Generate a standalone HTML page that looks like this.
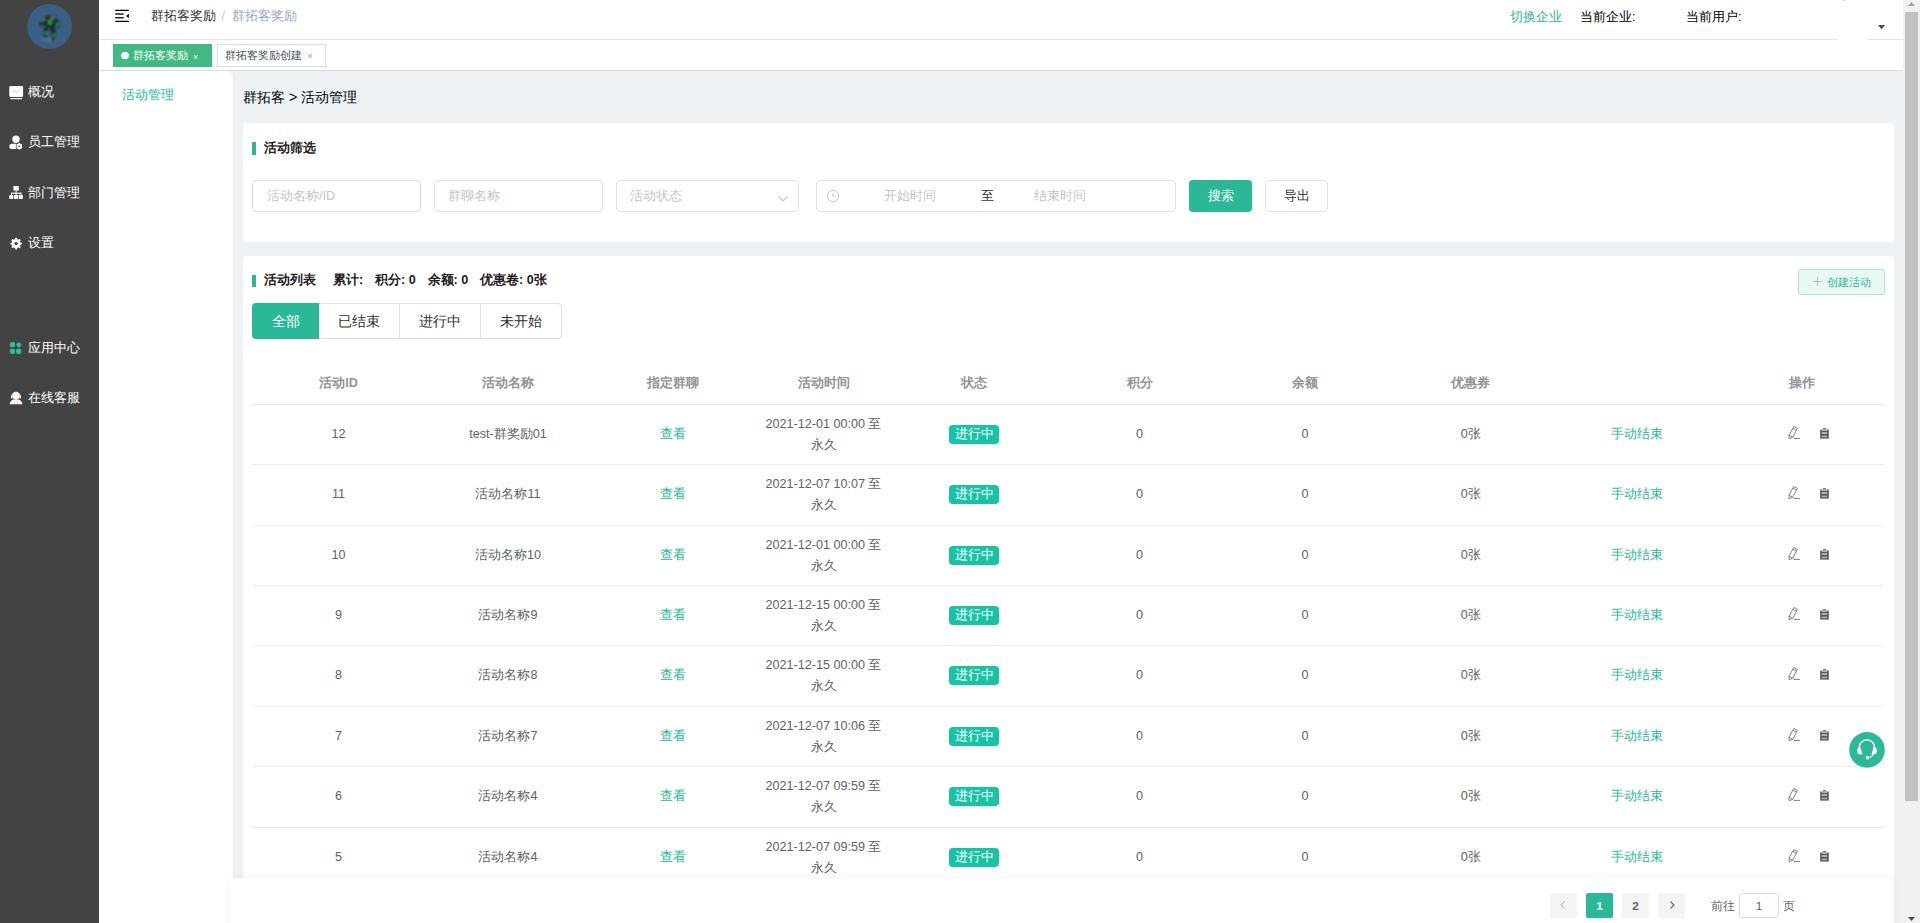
<!DOCTYPE html>
<html><head><meta charset="utf-8">
<style>
*{box-sizing:border-box;margin:0;padding:0}
html,body{width:1920px;height:923px;overflow:hidden;background:#fff;font-family:"Liberation Sans",sans-serif;color:#303133}
.a{position:absolute;white-space:nowrap}
#side{position:absolute;left:0;top:0;width:99px;height:923px;background:#434343}
#avatar{position:absolute;left:27px;top:4px;width:45px;height:45px;border-radius:50%;background:#3a5f85;overflow:hidden}
.mi{position:absolute;left:28px;font-size:12.6px;color:#fff;line-height:14px}
#header{position:absolute;left:99px;top:0;width:1804px;height:40px;background:#fff}
#tags{position:absolute;left:99px;top:40px;width:1804px;height:31px;background:#fff;border-bottom:1px solid #d8dce5}
#sub{position:absolute;left:99px;top:71px;width:135px;height:852px;background:#fff;border-right:1px solid #e4e7ed;border-top-right-radius:8px}
#main{position:absolute;left:99px;top:71px;width:1804px;height:852px;background:#eef2f5}
.card{position:absolute;background:#fff;border-radius:4px}
.bar{position:absolute;width:4px;background:#2bb898}
.inp{position:absolute;top:180px;height:32px;border:1px solid #dcdfe6;border-radius:4px;background:#fff}
.ph{position:absolute;font-size:12.6px;color:#c0c4cc;line-height:14px}
.th{position:absolute;top:376px;width:200px;margin-left:-100px;text-align:center;font-size:12.6px;color:#909399;font-weight:bold;line-height:14px}
.hl{position:absolute;left:252px;width:1632px;height:1px;background:#ebeef5}
.td{position:absolute;width:200px;margin-left:-100px;text-align:center;font-size:12.6px;color:#606266;line-height:14px}
.tag{position:absolute;width:50px;height:19px;margin-left:-25px;background:#15c4a4;border-radius:4px;color:#fff;font-size:12.6px;line-height:19px;text-align:center}
.grn{color:#2bb898}
#sb{position:absolute;left:1903px;top:0;width:17px;height:923px;background:#f1f1f1}
#thumb{position:absolute;left:1905px;top:12px;width:13px;height:789px;background:#c1c1c1}
</style></head><body>
<div id="side">
  <div id="avatar"></div>
  <div class="mi" style="top:85px">概况</div>
  <div class="mi" style="top:135px">员工管理</div>
  <div class="mi" style="top:186px">部门管理</div>
  <div class="mi" style="top:236px">设置</div>
  <div class="mi" style="top:341px">应用中心</div>
  <div class="mi" style="top:391px">在线客服</div>
</div>
<div id="header">
  <div class="a" style="left:52px;top:9px;font-size:12.6px;line-height:14px;color:#303133">群拓客奖励 <span style="color:#c0c4cc;margin:0 3px 0 2px">/</span> <span style="color:#97a8be">群拓客奖励</span></div>
  <div class="a grn" style="left:1411px;top:10px;font-size:12.6px;line-height:14px">切换企业</div>
  <div class="a" style="left:1481px;top:10px;font-size:12.6px;line-height:14px;color:#000">当前企业:</div>
  <div class="a" style="left:1587px;top:10px;font-size:12.6px;line-height:14px;color:#000">当前用户:</div>
</div>
<div id="tags">
  <div class="a" style="left:14px;top:4px;width:99px;height:23px;background:#42b983;color:#fff;font-size:10.8px;line-height:23px;padding-left:20px">群拓客奖励<span style="position:absolute;left:8px;top:7.5px;width:7.5px;height:7.5px;border-radius:50%;background:#fff"></span><span style="position:absolute;left:80px;top:1.5px;font-size:9px">×</span></div>
  <div class="a" style="left:118px;top:4px;width:109px;height:23px;border:1px solid #d8dce5;color:#495060;font-size:10.8px;line-height:21px;padding-left:7px">群拓客奖励创建<span style="position:absolute;left:89.5px;top:0.5px;font-size:9px;color:#999">×</span></div>
</div>
<div id="main"></div>
<div id="sub">
  <div class="a grn" style="left:23px;top:17px;font-size:12.6px;line-height:14px">活动管理</div>
</div>
<div class="a" style="left:243px;top:89px;font-size:14.4px;line-height:16px;color:#000">群拓客 &gt; 活动管理</div>

<div class="card" style="left:243px;top:123px;width:1651px;height:119px"></div>
<div class="bar" style="left:252px;top:142px;height:13px"></div>
<div class="a" style="left:264px;top:141px;font-size:12.6px;line-height:14px;font-weight:bold;color:#1f2022">活动筛选</div>
<div class="inp" style="left:252px;width:169px"></div><div class="ph" style="left:267px;top:189px">活动名称/ID</div>
<div class="inp" style="left:434px;width:169px"></div><div class="ph" style="left:448px;top:189px">群聊名称</div>
<div class="inp" style="left:616px;width:183px"></div><div class="ph" style="left:630px;top:189px">活动状态</div>
<div class="inp" style="left:816px;width:360px"></div>
<div class="ph" style="left:884px;top:189px">开始时间</div>
<div class="a" style="left:981px;top:189px;font-size:12.6px;line-height:14px;color:#303133">至</div>
<div class="ph" style="left:1034px;top:189px">结束时间</div>
<div class="a" style="left:1189px;top:180px;width:63px;height:32px;background:#2bb898;border-radius:4px;color:#fff;font-size:12.6px;line-height:32px;text-align:center">搜索</div>
<div class="a" style="left:1265px;top:180px;width:63px;height:32px;border:1px solid #dcdfe6;border-radius:4px;color:#303133;font-size:12.6px;line-height:30px;text-align:center">导出</div>

<div class="card" style="left:243px;top:256px;width:1651px;height:700px"></div>
<div class="bar" style="left:252px;top:275px;height:12px"></div>
<div class="a" style="left:264px;top:273px;font-size:12.6px;line-height:14px;font-weight:bold;color:#1f2022">活动列表</div>

<div id="rows">
<div class="hl" style="top:404px"></div>
<div class="th" style="left:338.5px">活动ID</div>
<div class="th" style="left:508px">活动名称</div>
<div class="th" style="left:673px">指定群聊</div>
<div class="th" style="left:823.5px">活动时间</div>
<div class="th" style="left:974px">状态</div>
<div class="th" style="left:1139.5px">积分</div>
<div class="th" style="left:1305px">余额</div>
<div class="th" style="left:1470.75px">优惠券</div>
<div class="th" style="left:1802px">操作</div>
<div class="hl" style="top:464px"></div>
<div class="td" style="left:338.5px;top:426.50px">12</div>
<div class="td" style="left:508px;top:426.50px">test-群奖励01</div>
<div class="td grn" style="left:673px;top:426.50px">查看</div>
<div class="td" style="left:823.5px;top:414.00px;line-height:21px">2021-12-01 00:00 至<br>永久</div>
<div class="tag" style="left:974px;top:424.50px">进行中</div>
<div class="td" style="left:1139.5px;top:426.50px">0</div>
<div class="td" style="left:1305px;top:426.50px">0</div>
<div class="td" style="left:1470.75px;top:426.50px">0张</div>
<div class="td grn" style="left:1636.5px;top:426.50px">手动结束</div>
<svg class="a" style="left:1786.5px;top:426.00px" width="14" height="14" viewBox="0 0 14 14"><path d="M6.8 0.5 L10.4 2.3 L5.7 11.4 L2 12.6 L2.1 9.1 Z M6 2.3 L9.5 4.1 M2.2 9.3 L5.6 11.2" fill="none" stroke="#6b6e73" stroke-width="0.85" stroke-linejoin="round"/><path d="M6.6 12.4 H12.9" stroke="#6b6e73" stroke-width="0.9"/></svg>
<svg class="a" style="left:1820px;top:427.50px" width="10" height="12" viewBox="0 0 10 12"><rect x="0.2" y="1.5" width="8.55" height="9.1" fill="#555"/><rect x="2.8" y="0.3" width="3.4" height="1.4" rx="0.5" fill="#555"/><rect x="1.6" y="1.5" width="5.6" height="1.2" fill="#fff" opacity="0.8"/><rect x="1.6" y="4.4" width="5.6" height="1.2" fill="#eee"/><rect x="1.6" y="7.5" width="5.6" height="1.9" fill="#aaa"/></svg>
<div class="hl" style="top:525px"></div>
<div class="td" style="left:338.5px;top:486.50px">11</div>
<div class="td" style="left:508px;top:486.50px">活动名称11</div>
<div class="td grn" style="left:673px;top:486.50px">查看</div>
<div class="td" style="left:823.5px;top:474.00px;line-height:21px">2021-12-07 10:07 至<br>永久</div>
<div class="tag" style="left:974px;top:484.50px">进行中</div>
<div class="td" style="left:1139.5px;top:486.50px">0</div>
<div class="td" style="left:1305px;top:486.50px">0</div>
<div class="td" style="left:1470.75px;top:486.50px">0张</div>
<div class="td grn" style="left:1636.5px;top:486.50px">手动结束</div>
<svg class="a" style="left:1786.5px;top:486.00px" width="14" height="14" viewBox="0 0 14 14"><path d="M6.8 0.5 L10.4 2.3 L5.7 11.4 L2 12.6 L2.1 9.1 Z M6 2.3 L9.5 4.1 M2.2 9.3 L5.6 11.2" fill="none" stroke="#6b6e73" stroke-width="0.85" stroke-linejoin="round"/><path d="M6.6 12.4 H12.9" stroke="#6b6e73" stroke-width="0.9"/></svg>
<svg class="a" style="left:1820px;top:487.50px" width="10" height="12" viewBox="0 0 10 12"><rect x="0.2" y="1.5" width="8.55" height="9.1" fill="#555"/><rect x="2.8" y="0.3" width="3.4" height="1.4" rx="0.5" fill="#555"/><rect x="1.6" y="1.5" width="5.6" height="1.2" fill="#fff" opacity="0.8"/><rect x="1.6" y="4.4" width="5.6" height="1.2" fill="#eee"/><rect x="1.6" y="7.5" width="5.6" height="1.9" fill="#aaa"/></svg>
<div class="hl" style="top:585px"></div>
<div class="td" style="left:338.5px;top:547.50px">10</div>
<div class="td" style="left:508px;top:547.50px">活动名称10</div>
<div class="td grn" style="left:673px;top:547.50px">查看</div>
<div class="td" style="left:823.5px;top:535.00px;line-height:21px">2021-12-01 00:00 至<br>永久</div>
<div class="tag" style="left:974px;top:545.50px">进行中</div>
<div class="td" style="left:1139.5px;top:547.50px">0</div>
<div class="td" style="left:1305px;top:547.50px">0</div>
<div class="td" style="left:1470.75px;top:547.50px">0张</div>
<div class="td grn" style="left:1636.5px;top:547.50px">手动结束</div>
<svg class="a" style="left:1786.5px;top:547.00px" width="14" height="14" viewBox="0 0 14 14"><path d="M6.8 0.5 L10.4 2.3 L5.7 11.4 L2 12.6 L2.1 9.1 Z M6 2.3 L9.5 4.1 M2.2 9.3 L5.6 11.2" fill="none" stroke="#6b6e73" stroke-width="0.85" stroke-linejoin="round"/><path d="M6.6 12.4 H12.9" stroke="#6b6e73" stroke-width="0.9"/></svg>
<svg class="a" style="left:1820px;top:548.50px" width="10" height="12" viewBox="0 0 10 12"><rect x="0.2" y="1.5" width="8.55" height="9.1" fill="#555"/><rect x="2.8" y="0.3" width="3.4" height="1.4" rx="0.5" fill="#555"/><rect x="1.6" y="1.5" width="5.6" height="1.2" fill="#fff" opacity="0.8"/><rect x="1.6" y="4.4" width="5.6" height="1.2" fill="#eee"/><rect x="1.6" y="7.5" width="5.6" height="1.9" fill="#aaa"/></svg>
<div class="hl" style="top:645px"></div>
<div class="td" style="left:338.5px;top:607.50px">9</div>
<div class="td" style="left:508px;top:607.50px">活动名称9</div>
<div class="td grn" style="left:673px;top:607.50px">查看</div>
<div class="td" style="left:823.5px;top:595.00px;line-height:21px">2021-12-15 00:00 至<br>永久</div>
<div class="tag" style="left:974px;top:605.50px">进行中</div>
<div class="td" style="left:1139.5px;top:607.50px">0</div>
<div class="td" style="left:1305px;top:607.50px">0</div>
<div class="td" style="left:1470.75px;top:607.50px">0张</div>
<div class="td grn" style="left:1636.5px;top:607.50px">手动结束</div>
<svg class="a" style="left:1786.5px;top:607.00px" width="14" height="14" viewBox="0 0 14 14"><path d="M6.8 0.5 L10.4 2.3 L5.7 11.4 L2 12.6 L2.1 9.1 Z M6 2.3 L9.5 4.1 M2.2 9.3 L5.6 11.2" fill="none" stroke="#6b6e73" stroke-width="0.85" stroke-linejoin="round"/><path d="M6.6 12.4 H12.9" stroke="#6b6e73" stroke-width="0.9"/></svg>
<svg class="a" style="left:1820px;top:608.50px" width="10" height="12" viewBox="0 0 10 12"><rect x="0.2" y="1.5" width="8.55" height="9.1" fill="#555"/><rect x="2.8" y="0.3" width="3.4" height="1.4" rx="0.5" fill="#555"/><rect x="1.6" y="1.5" width="5.6" height="1.2" fill="#fff" opacity="0.8"/><rect x="1.6" y="4.4" width="5.6" height="1.2" fill="#eee"/><rect x="1.6" y="7.5" width="5.6" height="1.9" fill="#aaa"/></svg>
<div class="hl" style="top:706px"></div>
<div class="td" style="left:338.5px;top:667.50px">8</div>
<div class="td" style="left:508px;top:667.50px">活动名称8</div>
<div class="td grn" style="left:673px;top:667.50px">查看</div>
<div class="td" style="left:823.5px;top:655.00px;line-height:21px">2021-12-15 00:00 至<br>永久</div>
<div class="tag" style="left:974px;top:665.50px">进行中</div>
<div class="td" style="left:1139.5px;top:667.50px">0</div>
<div class="td" style="left:1305px;top:667.50px">0</div>
<div class="td" style="left:1470.75px;top:667.50px">0张</div>
<div class="td grn" style="left:1636.5px;top:667.50px">手动结束</div>
<svg class="a" style="left:1786.5px;top:667.00px" width="14" height="14" viewBox="0 0 14 14"><path d="M6.8 0.5 L10.4 2.3 L5.7 11.4 L2 12.6 L2.1 9.1 Z M6 2.3 L9.5 4.1 M2.2 9.3 L5.6 11.2" fill="none" stroke="#6b6e73" stroke-width="0.85" stroke-linejoin="round"/><path d="M6.6 12.4 H12.9" stroke="#6b6e73" stroke-width="0.9"/></svg>
<svg class="a" style="left:1820px;top:668.50px" width="10" height="12" viewBox="0 0 10 12"><rect x="0.2" y="1.5" width="8.55" height="9.1" fill="#555"/><rect x="2.8" y="0.3" width="3.4" height="1.4" rx="0.5" fill="#555"/><rect x="1.6" y="1.5" width="5.6" height="1.2" fill="#fff" opacity="0.8"/><rect x="1.6" y="4.4" width="5.6" height="1.2" fill="#eee"/><rect x="1.6" y="7.5" width="5.6" height="1.9" fill="#aaa"/></svg>
<div class="hl" style="top:766px"></div>
<div class="td" style="left:338.5px;top:728.50px">7</div>
<div class="td" style="left:508px;top:728.50px">活动名称7</div>
<div class="td grn" style="left:673px;top:728.50px">查看</div>
<div class="td" style="left:823.5px;top:716.00px;line-height:21px">2021-12-07 10:06 至<br>永久</div>
<div class="tag" style="left:974px;top:726.50px">进行中</div>
<div class="td" style="left:1139.5px;top:728.50px">0</div>
<div class="td" style="left:1305px;top:728.50px">0</div>
<div class="td" style="left:1470.75px;top:728.50px">0张</div>
<div class="td grn" style="left:1636.5px;top:728.50px">手动结束</div>
<svg class="a" style="left:1786.5px;top:728.00px" width="14" height="14" viewBox="0 0 14 14"><path d="M6.8 0.5 L10.4 2.3 L5.7 11.4 L2 12.6 L2.1 9.1 Z M6 2.3 L9.5 4.1 M2.2 9.3 L5.6 11.2" fill="none" stroke="#6b6e73" stroke-width="0.85" stroke-linejoin="round"/><path d="M6.6 12.4 H12.9" stroke="#6b6e73" stroke-width="0.9"/></svg>
<svg class="a" style="left:1820px;top:729.50px" width="10" height="12" viewBox="0 0 10 12"><rect x="0.2" y="1.5" width="8.55" height="9.1" fill="#555"/><rect x="2.8" y="0.3" width="3.4" height="1.4" rx="0.5" fill="#555"/><rect x="1.6" y="1.5" width="5.6" height="1.2" fill="#fff" opacity="0.8"/><rect x="1.6" y="4.4" width="5.6" height="1.2" fill="#eee"/><rect x="1.6" y="7.5" width="5.6" height="1.9" fill="#aaa"/></svg>
<div class="hl" style="top:827px"></div>
<div class="td" style="left:338.5px;top:788.50px">6</div>
<div class="td" style="left:508px;top:788.50px">活动名称4</div>
<div class="td grn" style="left:673px;top:788.50px">查看</div>
<div class="td" style="left:823.5px;top:776.00px;line-height:21px">2021-12-07 09:59 至<br>永久</div>
<div class="tag" style="left:974px;top:786.50px">进行中</div>
<div class="td" style="left:1139.5px;top:788.50px">0</div>
<div class="td" style="left:1305px;top:788.50px">0</div>
<div class="td" style="left:1470.75px;top:788.50px">0张</div>
<div class="td grn" style="left:1636.5px;top:788.50px">手动结束</div>
<svg class="a" style="left:1786.5px;top:788.00px" width="14" height="14" viewBox="0 0 14 14"><path d="M6.8 0.5 L10.4 2.3 L5.7 11.4 L2 12.6 L2.1 9.1 Z M6 2.3 L9.5 4.1 M2.2 9.3 L5.6 11.2" fill="none" stroke="#6b6e73" stroke-width="0.85" stroke-linejoin="round"/><path d="M6.6 12.4 H12.9" stroke="#6b6e73" stroke-width="0.9"/></svg>
<svg class="a" style="left:1820px;top:789.50px" width="10" height="12" viewBox="0 0 10 12"><rect x="0.2" y="1.5" width="8.55" height="9.1" fill="#555"/><rect x="2.8" y="0.3" width="3.4" height="1.4" rx="0.5" fill="#555"/><rect x="1.6" y="1.5" width="5.6" height="1.2" fill="#fff" opacity="0.8"/><rect x="1.6" y="4.4" width="5.6" height="1.2" fill="#eee"/><rect x="1.6" y="7.5" width="5.6" height="1.9" fill="#aaa"/></svg>
<div class="hl" style="top:887px"></div>
<div class="td" style="left:338.5px;top:849.50px">5</div>
<div class="td" style="left:508px;top:849.50px">活动名称4</div>
<div class="td grn" style="left:673px;top:849.50px">查看</div>
<div class="td" style="left:823.5px;top:837.00px;line-height:21px">2021-12-07 09:59 至<br>永久</div>
<div class="tag" style="left:974px;top:847.50px">进行中</div>
<div class="td" style="left:1139.5px;top:849.50px">0</div>
<div class="td" style="left:1305px;top:849.50px">0</div>
<div class="td" style="left:1470.75px;top:849.50px">0张</div>
<div class="td grn" style="left:1636.5px;top:849.50px">手动结束</div>
<svg class="a" style="left:1786.5px;top:849.00px" width="14" height="14" viewBox="0 0 14 14"><path d="M6.8 0.5 L10.4 2.3 L5.7 11.4 L2 12.6 L2.1 9.1 Z M6 2.3 L9.5 4.1 M2.2 9.3 L5.6 11.2" fill="none" stroke="#6b6e73" stroke-width="0.85" stroke-linejoin="round"/><path d="M6.6 12.4 H12.9" stroke="#6b6e73" stroke-width="0.9"/></svg>
<svg class="a" style="left:1820px;top:850.50px" width="10" height="12" viewBox="0 0 10 12"><rect x="0.2" y="1.5" width="8.55" height="9.1" fill="#555"/><rect x="2.8" y="0.3" width="3.4" height="1.4" rx="0.5" fill="#555"/><rect x="1.6" y="1.5" width="5.6" height="1.2" fill="#fff" opacity="0.8"/><rect x="1.6" y="4.4" width="5.6" height="1.2" fill="#eee"/><rect x="1.6" y="7.5" width="5.6" height="1.9" fill="#aaa"/></svg>
</div><!--/rows-->


<div class="a" style="left:333px;top:273px;font-size:12.6px;line-height:14px;font-weight:bold;color:#1f2022">累计<span>:</span></div>
<div class="a" style="left:375px;top:273px;font-size:12.6px;line-height:14px;font-weight:bold;color:#1f2022">积分<span>: 0</span></div>
<div class="a" style="left:427.5px;top:273px;font-size:12.6px;line-height:14px;font-weight:bold;color:#1f2022">余额<span>: 0</span></div>
<div class="a" style="left:480px;top:273px;font-size:12.6px;line-height:14px;font-weight:bold;color:#1f2022">优惠卷<span>: 0</span>张</div>
<div class="a" style="left:1798px;top:269px;width:87px;height:26px;background:#eaf8f4;border:1px solid #a9e3d2;border-radius:3px;color:#2bb898;font-size:10.8px;line-height:24px;padding-left:28px">创建活动</div>
<svg class="a" style="left:1812px;top:276px" width="11" height="11" viewBox="0 0 11 11"><path d="M5.5 1V10M1 5.5H10" stroke="#86b9aa" stroke-width="0.75"/></svg>
<div class="a" style="left:252px;top:303px;width:310px;height:36px;border:1px solid #dcdfe6;border-radius:4px;background:#fff"></div>
<div class="a" style="left:252px;top:303px;width:67px;height:36px;background:#2bb898;border-radius:4px 0 0 4px;color:#fff;font-size:14px;line-height:36px;text-align:center">全部</div>
<div class="a" style="left:399px;top:304px;width:1px;height:34px;background:#dcdfe6"></div>
<div class="a" style="left:480px;top:304px;width:1px;height:34px;background:#dcdfe6"></div>
<div class="a" style="left:319px;top:303px;width:80px;height:36px;color:#303133;font-size:14px;line-height:36px;text-align:center">已结束</div>
<div class="a" style="left:400px;top:303px;width:80px;height:36px;color:#303133;font-size:14px;line-height:36px;text-align:center">进行中</div>
<div class="a" style="left:481px;top:303px;width:80px;height:36px;color:#303133;font-size:14px;line-height:36px;text-align:center">未开始</div>

<div class="a" style="left:230px;top:878px;width:1664px;height:60px;background:#fff;border-radius:4px;box-shadow:0 0 8px rgba(0,0,0,0.06)"></div>
<div class="a" style="left:1550px;top:893px;width:27px;height:25px;background:#f4f4f5;border-radius:2px"></div>
<svg class="a" style="left:1558px;top:900px" width="10" height="10" viewBox="0 0 10 10"><path d="M6.5 1.5L3 5L6.5 8.5" fill="none" stroke="#c0c4cc" stroke-width="1.2"/></svg>
<div class="a" style="left:1586px;top:893px;width:27px;height:25px;background:#2bb898;border-radius:2px;color:#fff;font-size:11.7px;font-weight:bold;line-height:25px;text-align:center">1</div>
<div class="a" style="left:1622px;top:893px;width:27px;height:25px;background:#f4f4f5;border-radius:2px;color:#606266;font-size:11.7px;font-weight:bold;line-height:25px;text-align:center">2</div>
<div class="a" style="left:1658px;top:893px;width:27px;height:25px;background:#f4f4f5;border-radius:2px"></div>
<svg class="a" style="left:1667px;top:900px" width="10" height="10" viewBox="0 0 10 10"><path d="M3.5 1.5L7 5L3.5 8.5" fill="none" stroke="#606266" stroke-width="1.1"/></svg>
<div class="a" style="left:1711px;top:899px;font-size:11.7px;line-height:14px;color:#606266">前往</div>
<div class="a" style="left:1739px;top:893px;width:40px;height:25px;border:1px solid #dcdfe6;border-radius:3px;color:#606266;font-size:11.7px;line-height:23px;text-align:center">1</div>
<div class="a" style="left:1783px;top:899px;font-size:11.7px;line-height:14px;color:#606266">页</div>



<svg class="a" style="left:0;top:0" width="99" height="420" viewBox="0 0 99 420">
 <g fill="#fff">
  <rect x="9.3" y="86" width="13.8" height="11" rx="1.2"/>
  <rect x="10.2" y="98" width="12" height="1.3" rx="0.6"/>
  <circle cx="16" cy="139.3" r="3.7"/>
  <path d="M12 143.8 H16.2 V149 H12 A2.6 2.6 0 0 1 12 143.8 Z"/>
  <circle cx="19.2" cy="146.3" r="2.7"/>
  <rect x="13.4" y="186" width="5.4" height="4.6"/>
  <rect x="15.6" y="190.4" width="1" height="2.4"/>
  <rect x="11" y="192.6" width="10.4" height="1.2"/>
  <rect x="11" y="193" width="1" height="2.2"/><rect x="15.6" y="193" width="1" height="2.2"/><rect x="20.4" y="193" width="1" height="2.2"/>
  <rect x="9.3" y="195" width="4" height="4"/><rect x="14" y="195" width="4.2" height="4"/><rect x="18.8" y="195" width="4" height="4"/>
  <circle cx="16.1" cy="243.6" r="4.6"/>
  <circle cx="16" cy="396.2" r="3.4"/>
  <path d="M9.6 404.3 Q10.5 400 13.6 399.6 H18.4 Q21.5 400 22.4 404.3 Z"/>
 </g>
 <path d="M12 92.4 L14 90.6 L16.5 92.6 L19.6 90.4" fill="none" stroke="#bbb" stroke-width="0.7"/>
 <g fill="#fff"><rect x="18.7" y="142.9" width="1" height="6.8"/><rect x="18.7" y="142.9" width="1" height="6.8" transform="rotate(60 19.2 146.3)"/><rect x="18.7" y="142.9" width="1" height="6.8" transform="rotate(120 19.2 146.3)"/></g><circle cx="19.2" cy="146.3" r="2.6" fill="#fff"/><circle cx="19.2" cy="146.3" r="0.9" fill="#434343"/><path d="M16.3 143.6 V149.2" stroke="#434343" stroke-width="0.5"/>
 <g fill="#fff">
  <rect x="15.2" y="237.8" width="1.8" height="11.6" rx="0.5"/>
  <rect x="15.2" y="237.8" width="1.8" height="11.6" rx="0.5" transform="rotate(45 16.1 243.6)"/>
  <rect x="15.2" y="237.8" width="1.8" height="11.6" rx="0.5" transform="rotate(90 16.1 243.6)"/>
  <rect x="15.2" y="237.8" width="1.8" height="11.6" rx="0.5" transform="rotate(135 16.1 243.6)"/>
 </g>
 <circle cx="16.1" cy="243.6" r="1.7" fill="#434343"/>
 <path d="M11.8 396.5 A4.2 4.2 0 0 1 20.2 396.5" fill="none" stroke="#fff" stroke-width="1.1"/>
 <rect x="11" y="395.5" width="1.6" height="3" rx="0.7" fill="#fff"/><rect x="19.4" y="395.5" width="1.6" height="3" rx="0.7" fill="#fff"/>
 <g fill="#2bbf9b">
  <rect x="9.9" y="342" width="5.2" height="5.3" rx="1.9"/>
  <rect x="16.6" y="342.7" width="4.4" height="4.4" rx="1.5" transform="rotate(45 18.8 344.9)"/>
  <rect x="9.9" y="348.7" width="5.2" height="5.3" rx="1.9"/>
  <rect x="16" y="348.7" width="5.4" height="5.3" rx="1.9"/>
 </g>
</svg>
<svg class="a" style="left:27px;top:4px" width="45" height="45" viewBox="0 0 45 45">
 <defs><filter id="bl" x="-30%" y="-30%" width="160%" height="160%"><feGaussianBlur stdDeviation="0.85"/></filter></defs>
 <g filter="url(#bl)">
 <ellipse cx="22" cy="35.5" rx="8" ry="2" fill="#5a7fa3" opacity="0.5"/>
 <g fill="#16221c" opacity="0.85">
  <path d="M17 13 L22 11.5 L26 12 L30 14 L29 20 L27 24 L20 24.5 L17.5 20 Z"/>
  <path d="M12 18.5 L18 18 L18.5 21 L12.5 21.5 Z"/>
  <path d="M28.5 14.5 L31.5 16 L33 21 L32 24 L30 23 L29.5 19 Z"/>
  <path d="M16.5 23.5 L21 24 L21.5 30 L20 33.5 L16.5 33 L17 28 Z"/>
  <path d="M23.5 23.5 L28 23.5 L28.8 30 L28 36.5 L25 36.5 L24.5 30 Z"/>
 </g>
 <g fill="#2ec85a" opacity="0.75">
  <path d="M21 16 L25 15.5 L24.5 20.5 L21.5 21 Z"/>
  <path d="M29.5 18.5 L31.5 19 L31.5 22 L29.8 22 Z"/>
  <path d="M18 27.5 L20.8 27.8 L20.5 31 L18.2 30.5 Z"/>
  <path d="M26.2 29.5 L28 29.5 L27.8 33 L26.4 33 Z"/>
  <path d="M26 12.5 L28 13.5 L27 16 L25.5 15 Z"/>
 </g>
 <circle cx="17.8" cy="15.5" r="1.1" fill="#c9703c" opacity="0.85"/><circle cx="24.8" cy="13.8" r="1.3" fill="#c9703c" opacity="0.85"/>
 </g>
</svg>
<svg class="a" style="left:115px;top:9px" width="15" height="14" viewBox="115 9 15 14">
 <path d="M115.7 10.4H128.3M115.7 21.4H128.3" stroke="#000" stroke-width="1.3" stroke-linecap="round"/>
 <path d="M115.7 14H123.2M115.7 17.8H123.2" stroke="#222" stroke-width="1.4" stroke-linecap="round"/>
 <path d="M126.1 15.9L128.8 13.8V18Z" fill="#000"/>
</svg>
<svg class="a" style="left:1849px;top:731.5px" width="36" height="36" viewBox="0 0 36 36">
 <circle cx="18" cy="17.9" r="17.8" fill="#2bb999"/>
 <path d="M10.5 17.2 A7.6 7.6 0 1 1 25.3 17.2" fill="none" stroke="#fff" stroke-width="1.3"/>
 <path d="M11.3 14.8 L13.5 22.4 Q8.1 23.4 8.1 19 Q8.1 15.3 11.3 14.8 Z" fill="#fff"/>
 <path d="M24.6 14.8 L22.4 22.4 Q27.8 23.4 27.8 19 Q27.8 15.3 24.6 14.8 Z" fill="#fff"/>
 <path d="M24.4 22 Q23.2 25 19.6 25.6" fill="none" stroke="#fff" stroke-width="1.1"/>
 <circle cx="18.6" cy="25.6" r="1.9" fill="#fff"/>
</svg>

<svg class="a" style="left:777px;top:195px" width="12" height="8" viewBox="0 0 12 8"><path d="M1.5 1.5L6 6L10.5 1.5" fill="none" stroke="#c0c4cc" stroke-width="1.1"/></svg>
<svg class="a" style="left:826px;top:189px" width="14" height="14" viewBox="0 0 14 14"><circle cx="7" cy="7" r="5.6" fill="none" stroke="#c0c4cc" stroke-width="1"/><path d="M7 3.8V7.2H9.6" fill="none" stroke="#c0c4cc" stroke-width="1"/></svg>
<div id="sb"></div><div id="thumb"></div>
<div class="a" style="left:99px;top:39px;width:1739px;height:1px;background:#e6e6e6"></div>
<div class="a" style="left:1868px;top:39px;width:35px;height:1px;background:#e6e6e6"></div>
<svg class="a" style="left:1877px;top:24px" width="9" height="6" viewBox="0 0 9 6"><path d="M1 1.1H8L4.5 5.3Z" fill="#4a4a4a"/></svg>
<div class="a" style="left:1843px;top:-1px;width:2px;height:2px;border-radius:50%;background:#f9a9a9"></div>
<svg class="a" style="left:1903px;top:0" width="17" height="923" viewBox="0 0 17 923"><path d="M5 6H12L8.5 2Z" fill="#a3a3a3"/><path d="M5 917H12L8.5 921Z" fill="#505050"/></svg>

</body></html>
